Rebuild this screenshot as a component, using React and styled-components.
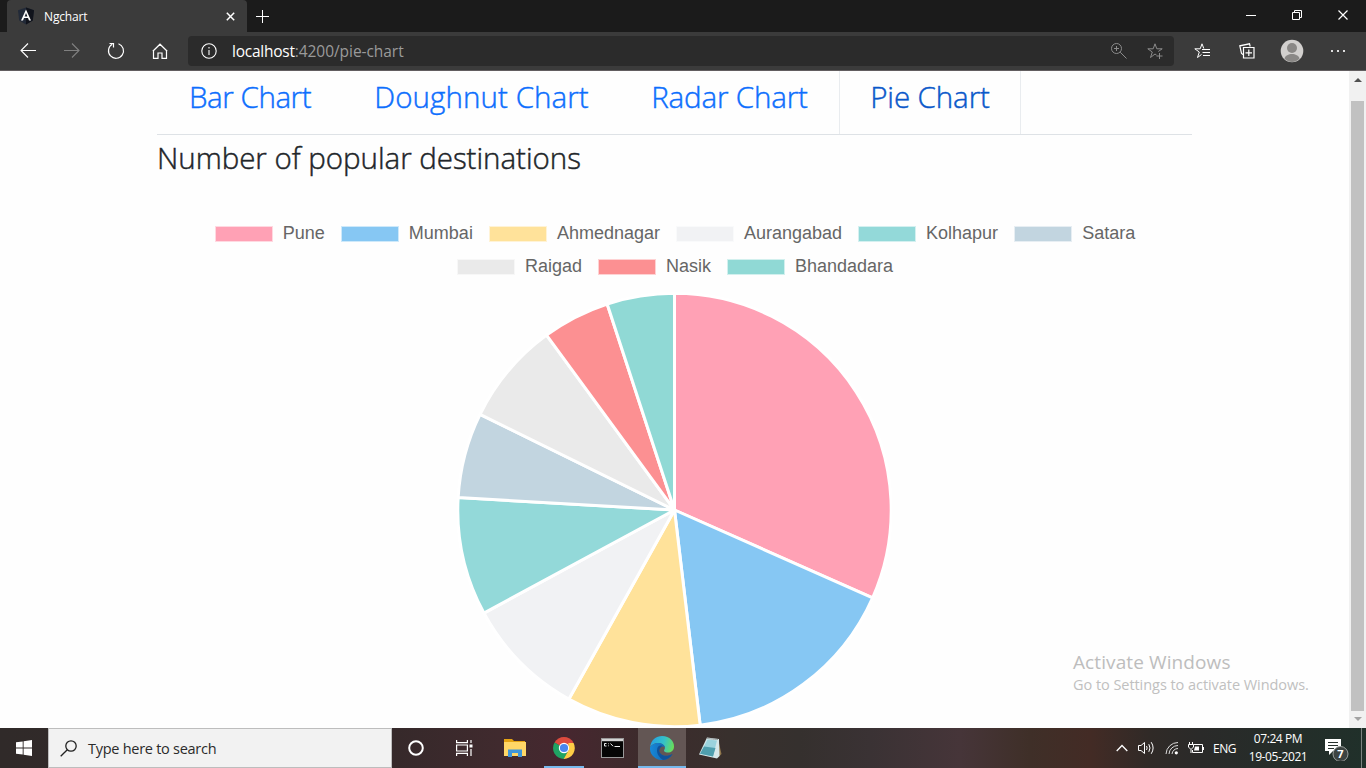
import React from "react";
import styled, { createGlobalStyle } from "styled-components";

const ui = `"Segoe UI", "Open Sans", "Noto Sans", sans-serif`;

const GlobalStyle = createGlobalStyle`
  * { box-sizing: border-box; }
  body { margin: 0; overflow: hidden; background: #fff; }
`;

const Screen = styled.div`
  width: 1366px;
  height: 768px;
  display: flex;
  flex-direction: column;
  overflow: hidden;
  font-family: ${ui};
`;

const Text = styled.span`
  display: block;
  white-space: nowrap;
  font-size: ${(p) => p.$size}px;
  line-height: ${(p) => p.$line || Math.round(p.$size * 1.4)}px;
  letter-spacing: ${(p) => p.$track || 0}px;
  color: ${(p) => p.$color || "#fff"};
`;
const DisplayText = styled(Text)`
  font-weight: 300;
  -webkit-text-stroke: 0.45px currentColor;
`;

/* Browser frame */
const TabStrip = styled.header`
  height: 32px;
  flex: none;
  display: flex;
  background: #1b1b1b;
  padding-left: 7px;
`;
const BrowserTab = styled.div`
  width: 240px;
  height: 32px;
  background: #3b3b3b;
  border-radius: 4px 4px 0 0;
  display: flex;
  align-items: center;
  padding: 0 12px 0 10px;
  gap: 9px;
`;
const TabTitle = styled.div`
  flex: 1;
`;
const NewTab = styled.div`
  width: 31px;
  display: grid;
  place-items: center;
`;
const WindowButtons = styled.div`
  margin-left: auto;
  display: grid;
  grid-template-columns: repeat(3, 46px);
  place-items: center;
  height: 29px;
`;
const Toolbar = styled.div`
  height: 39px;
  flex: none;
  display: flex;
  align-items: center;
  background: #3b3b3b;
  border-bottom: 1px solid #625e60;
  padding-left: 6px;
`;
const ToolButton = styled.div`
  width: ${(p) => p.$w || 44}px;
  height: 38px;
  flex: none;
  display: grid;
  place-items: center;
`;
const AddressBar = styled.div`
  width: 986px;
  height: 30px;
  margin: 0 6px;
  background: #2b2b2b;
  border-radius: 4px;
  display: flex;
  align-items: center;
  padding: 0 1px 0 13px;
  gap: 15px;
`;
const Address = styled.div`
  flex: 1;
  display: flex;
`;
const AddressActions = styled.div`
  display: flex;
`;

/* Page */
const Viewport = styled.div`
  flex: 1;
  min-height: 0;
  display: flex;
  background: #fefefe;
  position: relative;
`;
const Page = styled.main`
  flex: 1;
  padding: 0 157px;
  min-width: 0;
  overflow: hidden;
`;
const Nav = styled.nav`
  display: flex;
  height: 64px;
  border-bottom: 1px solid #dee2e6;
`;
const NavItem = styled.a`
  width: ${(p) => p.$w}px;
  height: 63px;
  padding-top: 5px;
  display: flex;
  justify-content: center;
  border: solid ${(p) => (p.$active ? "#e9ecef" : "transparent")};
  border-width: 0 1px;
`;
const Heading = styled.h3`
  margin: 0;
  height: 89px;
  padding-top: 2px;
  font-weight: 400;
`;
const Legend = styled.div`
  display: flex;
  flex-direction: column;
  padding-left: 1px;
`;
const LegendRow = styled.div`
  height: 33px;
  display: flex;
  justify-content: center;
  gap: 16px;
`;
const LegendItem = styled.div`
  display: flex;
  gap: 10px;
  font: 18px/18px "Liberation Sans", Arial, sans-serif;
  color: #666;
`;
const Swatch = styled.i`
  width: 58px;
  height: 16px;
  margin-top: 2px;
  background: ${(p) => p.$color};
  border: 1px solid rgba(255, 255, 255, 0.6);
`;
const PieSvg = styled.svg`
  display: block;
  margin: 2px auto 0;
`;
const ScrollTrack = styled.div`
  width: 17px;
  background: #f1f1f1;
  display: flex;
  flex-direction: column;
  align-items: center;
  justify-content: space-between;
  padding: 7px 0 7px;
`;
const ScrollThumb = styled.div`
  width: 13px;
  height: 610px;
  margin-top: 12px;
  background: #c1c1c1;
`;
const Watermark = styled.div`
  position: absolute;
  left: 1073px;
  top: 579px;
`;

/* Taskbar */
const Taskbar = styled.footer`
  height: 40px;
  flex: none;
  display: flex;
  background: linear-gradient(90deg, #302a29 0, #35292a 390px, #402a2e 500px, #46272f 570px, #3d2b2c 640px, #38302d 730px, #35302e 800px, #3a3234 870px, #463539 960px, #3f2f28 1030px, #432b25 1090px, #302a27 1150px, #2a2a29 1200px, #20302a 1366px);
`;
const StartButton = styled.div`
  width: 48px;
  display: grid;
  place-items: center;
`;
const SearchBox = styled.div`
  width: 344px;
  height: 40px;
  background: #f2f2f2;
  border: 1px solid #bdbdbd;
  display: flex;
  align-items: center;
  gap: 11px;
  padding: 1px 0 0 11px;
`;
const TaskButton = styled.div`
  width: ${(p) => p.$w || 49}px;
  height: 40px;
  display: grid;
  place-items: center;
  background: ${(p) => (p.$active ? "#635654" : "transparent")};
`;
const RunningApp = styled(TaskButton)`
  width: ${(p) => p.$w}px;
  margin: 0 ${(p) => p.$gap || 0}px;
  border-bottom: 2px solid #76b9ed;
  padding-top: 2px;
`;
const Tray = styled.div`
  margin-left: auto;
  display: flex;
  align-items: center;
`;
const TrayItem = styled.div`
  width: ${(p) => p.$w}px;
  display: grid;
  place-items: center;
`;
const Clock = styled.div`
  width: 70px;
  display: flex;
  flex-direction: column;
  align-items: center;
`;
const ShowDesktop = styled.div`
  width: 5px;
  height: 40px;
  border-left: 1px solid #7b8380;
`;

const Icon = ({ w = 16, h = w, color = "#fff", sw = 1, children }) => (
  <svg width={w} height={h} viewBox={`0 0 ${w} ${h}`} fill="none" stroke={color} strokeWidth={sw}>
    {children}
  </svg>
);

const AngularLogo = () => (
  <Icon w={18} color="none">
    <path d="M9 0.5 17 3.3 15.8 13.5 9 17.5 2.2 13.5 1 3.3Z" fill="#222a38" />
    <path d="M9 0.5 17 3.3 15.8 13.5 9 17.5Z" fill="#10131b" />
    <path d="M9 2.4 4 13.5H6L7 11H11L12 13.5H14ZM9 6 10.4 9.4H7.6Z" fill="#fff" fillRule="evenodd" />
  </Icon>
);

const SLICES = [
  { name: "Pune", color: "#ffa1b5", from: 0, to: 113.9 },
  { name: "Mumbai", color: "#86c7f3", from: 113.9, to: 173.2 },
  { name: "Ahmednagar", color: "#ffe29a", from: 173.2, to: 209.2 },
  { name: "Aurangabad", color: "#f1f2f4", from: 209.2, to: 241.6 },
  { name: "Kolhapur", color: "#93d9d9", from: 241.6, to: 273.3 },
  { name: "Satara", color: "#c2d5e0", from: 273.3, to: 296.2 },
  { name: "Raigad", color: "#eaeaea", from: 296.2, to: 323.8 },
  { name: "Nasik", color: "#fc9092", from: 323.8, to: 341.9 },
  { name: "Bhandadara", color: "#90d9d5", from: 341.9, to: 360 },
];

const point = (deg, r = 216.7) => {
  const a = (deg * Math.PI) / 180;
  return `${(217.5 + r * Math.sin(a)).toFixed(2)} ${(218 - r * Math.cos(a)).toFixed(2)}`;
};

const PieChart = () => (
  <PieSvg width="435" height="436" viewBox="0 0 435 436">
    {SLICES.map((s) => (
      <path
        key={s.name}
        d={`M217.5 218L${point(s.from)}A216.7 216.7 0 0 1 ${point(s.to)}Z`}
        fill={s.color}
        stroke="#fff"
        strokeWidth="3"
        strokeLinejoin="bevel"
      />
    ))}
  </PieSvg>
);

const LegendEntry = ({ slice }) => (
  <LegendItem>
    <Swatch $color={slice.color} />
    {slice.name}
  </LegendItem>
);

const NAV = [
  { label: "Bar Chart", w: 186, track: -0.42 },
  { label: "Doughnut Chart", w: 277, track: 0.08 },
  { label: "Radar Chart", w: 219, track: -0.15 },
  { label: "Pie Chart", w: 182, track: -0.1, active: true },
];

const Browser = () => (
  <>
    <TabStrip>
      <BrowserTab>
        <AngularLogo />
        <TabTitle>
          <Text $size={12} $track={-0.15}>Ngchart</Text>
        </TabTitle>
        <Icon w={9} sw={1.5}><path d="M.8 .8 8.2 8.2M8.2 .8 .8 8.2" /></Icon>
      </BrowserTab>
      <NewTab>
        <Icon w={13}><path d="M6.5 0V13M0 6.5H13" /></Icon>
      </NewTab>
      <WindowButtons>
        <Icon w={10}><path d="M0 5.5H10" /></Icon>
        <Icon w={10}><path d="M.5 2.5H7.5V9.5H.5ZM2.5 2.5V.5H9.5V7.5H7.5" /></Icon>
        <Icon w={10} sw={1.2}><path d="M.5 .5 9.5 9.5M9.5 .5 .5 9.5" /></Icon>
      </WindowButtons>
    </TabStrip>
    <Toolbar>
      <ToolButton>
        <Icon w={16} sw={1.1}><path d="M16 7.5H1M8 .5 1 7.5 8 14.5" /></Icon>
      </ToolButton>
      <ToolButton>
        <Icon w={16} sw={1.1} color="#808080"><path d="M0 7.5H15M8 .5 15 7.5 8 14.5" /></Icon>
      </ToolButton>
      <ToolButton>
        <Icon w={18} sw={1.2}><path d="M11.5 1.7A7.5 7.5 0 1 1 5.2 2.3M2.5 1.5H6.5V5.5" /></Icon>
      </ToolButton>
      <ToolButton>
        <Icon w={16} sw={1.2}><path d="M1.5 8V15.3H6V10H10V15.3H14.5V8M.8 8.2 8 1.2 15.2 8.2" /></Icon>
      </ToolButton>
      <AddressBar>
        <Icon w={16} sw={1.1}>
          <circle cx="8" cy="8" r="7.2" />
          <path d="M8 7V12M8 4V5.5" />
        </Icon>
        <Address>
          <Text $size={15.5} $track={-0.25} $line={22}>localhost</Text>
          <Text $size={15.5} $track={-0.05} $line={22} $color="#9a9a9a">:4200/pie-chart</Text>
        </Address>
        <AddressActions>
          <ToolButton $w={36}>
            <Icon w={16} color="#8c8c8c"><circle cx="5.5" cy="5.5" r="5" /><path d="M5.5 3V8M3 5.5H8M9.2 9.2 15.5 15.5" /></Icon>
          </ToolButton>
          <ToolButton $w={36}>
            <Icon w={16} color="#8c8c8c"><path d="M9.5 12 8 11 3.5 14.5 5.3 9 .8 5.8H6.2L8 .8 9.8 5.8H15.2L11.3 8.5M12.5 10V16M9.5 13H15.5" /></Icon>
          </ToolButton>
        </AddressActions>
      </AddressBar>
      <ToolButton $w={45}>
        <Icon w={17}><path d="M7.5 11.5 3.5 14.5 5.3 9 .8 5.8H6.2L8 .8 9.8 5.5M8 6.5H16M8.5 9.5H16M9 12.5H16" /></Icon>
      </ToolButton>
      <ToolButton>
        <Icon w={16} sw={1.2}><path d="M4.5 4.5H15V15H4.5ZM9.8 6.5V13M6.5 9.8H13M4 11.5 2.5 10.5.8 2.8 10.5.8 11.2 3.5" /></Icon>
      </ToolButton>
      <ToolButton $w={46}>
        <Icon w={24} color="none">
          <circle cx="12" cy="12" r="11.3" fill="#d2d0ce" />
          <circle cx="12" cy="9" r="5" fill="#8a8886" />
          <path d="M4.5 19.5C6 13.5 18 13.5 19.5 19.5C16 24 8 24 4.5 19.5Z" fill="#8a8886" />
        </Icon>
      </ToolButton>
      <ToolButton $w={46}>
        <Icon w={16} h={4} color="none">
          {[1, 7, 13].map((x) => <rect key={x} x={x} y="1" width="2" height="2" fill="#ddd" />)}
        </Icon>
      </ToolButton>
    </Toolbar>
  </>
);

const ExplorerIcon = () => (
  <Icon w={22} h={20} color="none">
    <path d="M0 1H8L10 3H21V7H0Z" fill="#e5a413" />
    <path d="M0 4H22V18H0Z" fill="#ffd767" />
    <path d="M4 11.5H18V19H14V15H8V19H4Z" fill="#3f96d8" />
  </Icon>
);
const ChromeIcon = () => (
  <Icon w={22} color="none">
    <path d="M11 11 1.5 5.5A11 11 0 0 1 20.5 5.5Z" fill="#dd4b3e" />
    <path d="M11 11 1.5 5.5A11 11 0 0 0 11 22L15.3 13.5Z" fill="#1fa463" />
    <path d="M20.5 5.8A11 11 0 0 1 10.7 22L15.4 13.5V6H20.5Z" fill="#ffcd46" />
    <circle cx="11" cy="11" r="5.2" fill="#fff" />
    <circle cx="11" cy="11" r="4.1" fill="#4a86ee" />
  </Icon>
);
const TerminalIcon = () => (
  <Icon w={23} h={20} color="none">
    <rect x=".5" y=".5" width="22" height="19" fill="#050505" stroke="#999" />
    <path d="M1 1H22V3.2H1Z" fill="#d4d4d4" />
    <path d="M5.5 5.5H3.5V8H5.5M7.5 5.5V6.2M7.5 7.5V8.2M9.5 5.5 12 8.2M13.5 8.5H19" stroke="#eee" />
  </Icon>
);
const EdgeIcon = () => (
  <Icon w={24} color="none">
    <defs>
      <linearGradient id="edgeTop" x1="0" x2="1" y1=".4" y2=".6">
        <stop offset="0" stopColor="#25a0e3" />
        <stop offset=".55" stopColor="#35c1c8" />
        <stop offset="1" stopColor="#6adf56" />
      </linearGradient>
      <linearGradient id="edgeSide" x1="0" x2="1">
        <stop offset="0" stopColor="#1689da" />
        <stop offset="1" stopColor="#1259a3" />
      </linearGradient>
    </defs>
    <path d="M0 11.5C1 3.5 6.5 0 12 0C20 0 24 5.5 24 10.5C24 14.5 21 16.5 18 16.5C14.5 16.5 13.5 15 14.3 13.8C16.4 11 13 7 8.5 7C4.5 7 1.2 9 0 11.5Z" fill="url(#edgeTop)" />
    <path d="M0 11.5C1.2 8.8 4.8 7 8.5 7C12 7 14.8 9.3 14.9 11.5C13.5 9.8 9.5 10.5 9 14C8.6 18 12.5 20.2 16.5 20C19 19.8 21 19 22.5 18C20 22 16.5 24 12.3 24C5 24-.5 18 0 11.5Z" fill="url(#edgeSide)" />
    <path d="M8.3 10.5C6.2 13 6 19.5 13 23.9C17 23.7 20.5 21.5 22.5 18C18 20.5 13 20.5 10.5 17.5C8.5 15.2 9 12 12.5 10C11 9.3 9.3 9.5 8.3 10.5Z" fill="#10529a" />
  </Icon>
);
const NotepadIcon = () => (
  <Icon w={23} h={22} color="none">
    <path d="M19 2 22.5 17 18.5 21Z" fill="#92784d" />
    <path d="M8 .5 20 2 20.5 19 18 21.5 0 17.5Z" fill="#d7e8ea" />
    <path d="M8.5 2.5 18 3.5 14 19.5 1 16.8Z" fill="#9bd3dd" />
    <path d="M5 9.5 16.5 11 14 19.5 1 16.8Z" fill="#4f9fae" />
    <path d="M8.5 1.5 19 2.6" stroke="#666" strokeDasharray="1 1" />
  </Icon>
);

const WindowsTaskbar = () => (
  <Taskbar>
    <StartButton>
      <Icon w={16} color="none">
        <path d="M0 2.3 6.7 1.4V7.5H0ZM7.6 1.2 16 0V7.5H7.6ZM0 8.4H6.7V14.6L0 13.7ZM7.6 8.4H16V16L7.6 14.8Z" fill="#fff" />
      </Icon>
    </StartButton>
    <SearchBox>
      <Icon w={17} color="#222" sw={1.3}><circle cx="11" cy="6" r="5.2" /><path d="M7.3 9.7 .7 16.3" /></Icon>
      <Text $size={14.5} $track={-0.27} $color="#2b2b2b">Type here to search</Text>
    </SearchBox>
    <TaskButton $w={48}>
      <Icon w={16} sw={2}><circle cx="8" cy="8" r="6.8" /></Icon>
    </TaskButton>
    <TaskButton $w={48}>
      <Icon w={17} h={16} sw={1.2}>
        <path d="M.6 0V2.6H11.4V0M.6 16V13.4H11.4V16M.6 5H11.4V11H.6ZM15 0V3M15 9V16" />
        <path d="M13.5 4.5H16.5V7.5H13.5Z" fill="#fff" stroke="none" />
      </Icon>
    </TaskButton>
    <TaskButton $w={53}><ExplorerIcon /></TaskButton>
    <RunningApp $w={40} $gap={3}><ChromeIcon /></RunningApp>
    <TaskButton $w={51}><TerminalIcon /></TaskButton>
    <RunningApp $w={48} $active><EdgeIcon /></RunningApp>
    <TaskButton $w={49}><NotepadIcon /></TaskButton>
    <Tray>
      <TrayItem $w={26}><Icon w={12} h={8} sw={1.3}><path d="M.7 7 6 1.5 11.3 7" /></Icon></TrayItem>
      <TrayItem $w={23}>
        <Icon w={17} h={14}><path d="M.5 4.5H3L6.5 1.5V12.5L3 9.5H.5ZM8.5 5Q9.8 7 8.5 9M10.8 3.2Q13.2 7 10.8 10.8M13.2 1.2Q17 7 13.2 12.8" /></Icon>
      </TrayItem>
      <TrayItem $w={27}>
        <Icon w={14} h={14} color="#ddd">
          <path d="M1 13A12 12 0 0 1 13 1.5M4 13A9 9 0 0 1 13 4.5M7 13A6 6 0 0 1 13 7.5" />
          <circle cx="11.3" cy="11.8" r="1.6" fill="#fff" stroke="none" />
        </Icon>
      </TrayItem>
      <TrayItem $w={21}>
        <Icon w={16} h={12}><path d="M5.5 2.5H14.5V10.5H4.5V8M15.5 5V8M.5 2.5H5.5V5L3 7.5.5 5ZM1.5 0V2.5M4.5 0V2.5M3 7.5V11" /><path d="M7 4.5H11V8.5H6Z" fill="#fff" stroke="none" /></Icon>
      </TrayItem>
      <TrayItem $w={37}><Text $size={12} $track={-0.45}>ENG</Text></TrayItem>
      <Clock>
        <Text $size={12} $line={18} $track={-0.4}>07:24 PM</Text>
        <Text $size={12} $line={18} $track={-0.4}>19-05-2021</Text>
      </Clock>
      <TrayItem $w={48}>
        <Icon w={26} h={26}>
          <path d="M1 4H17V16H9L5 20V16H1Z" fill="#fff" stroke="none" />
          <path d="M4 7.5H14M4 10.5H14M4 13.5H10" stroke="#29332f" />
          <circle cx="16.5" cy="19" r="7.5" fill="#3d4442" stroke="#9a9f9d" />
          <text x="16.5" y="23" textAnchor="middle" fill="#fff" stroke="none" fontSize="11" fontWeight="700">7</text>
        </Icon>
      </TrayItem>
      <ShowDesktop />
    </Tray>
  </Taskbar>
);

export default function App() {
  return (
    <Screen>
      <GlobalStyle />
      <Browser />
      <Viewport>
        <Page>
          <Nav>
            {NAV.map((n) => (
              <NavItem key={n.label} $w={n.w} $active={n.active}>
                <DisplayText $size={29.5} $line={42} $track={n.track} $color={n.active ? "#0a58ca" : "#0d6efd"}>{n.label}</DisplayText>
              </NavItem>
            ))}
          </Nav>
          <Heading>
            <DisplayText $size={29.5} $line={42} $track={-0.03} $color="#212529">Number of popular destinations</DisplayText>
          </Heading>
          <Legend>
            <LegendRow>{SLICES.slice(0, 6).map((s) => <LegendEntry key={s.name} slice={s} />)}</LegendRow>
            <LegendRow>{SLICES.slice(6).map((s) => <LegendEntry key={s.name} slice={s} />)}</LegendRow>
          </Legend>
          <PieChart />
        </Page>
        <ScrollTrack>
          <Icon w={8} h={4} color="none"><path d="M0 4 4 0 8 4Z" fill="#505050" /></Icon>
          <ScrollThumb />
          <Icon w={8} h={4} color="none"><path d="M0 0H8L4 4Z" fill="#a3a3a3" /></Icon>
        </ScrollTrack>
        <Watermark>
          <Text $size={19} $line={25} $track={0.1} $color="#bdbdbd">Activate Windows</Text>
          <Text $size={14.5} $line={20} $track={-0.05} $color="#c0c0c0">Go to Settings to activate Windows.</Text>
        </Watermark>
      </Viewport>
      <WindowsTaskbar />
    </Screen>
  );
}
